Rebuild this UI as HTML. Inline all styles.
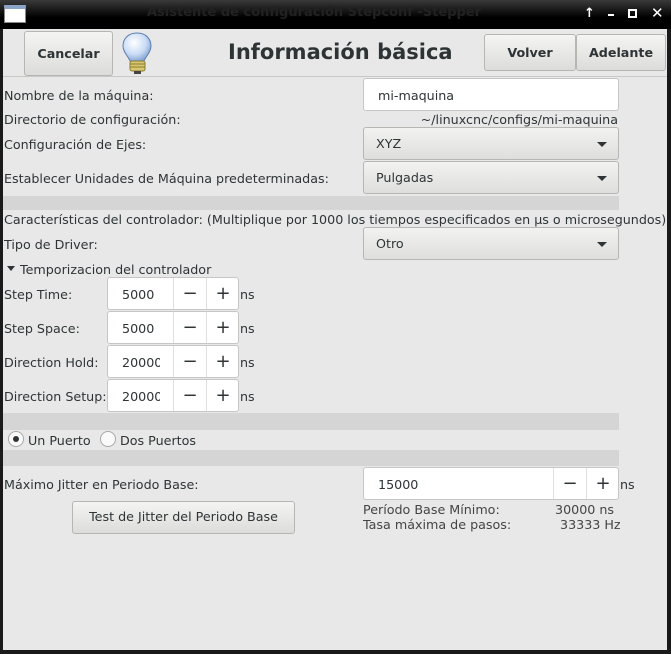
<!DOCTYPE html>
<html><head><meta charset="utf-8"><style>
*{box-sizing:border-box;margin:0;padding:0}
body{width:671px;height:654px;background:#1a1a1a;font-family:"DejaVu Sans","Liberation Sans",sans-serif;font-size:12.7px;color:#2e3436;position:relative;overflow:hidden}
.a{position:absolute;white-space:nowrap}
#title{left:0;top:0;width:671px;height:29px;background:linear-gradient(#3a3a3a,#000 60%);}
#win{left:3px;top:29px;width:664px;height:621px;background:#e8e8e8}
.btn{position:absolute;border:1px solid #b6b6b3;border-radius:3px;background:linear-gradient(#f4f4f3,#dcdcda);text-align:center;font-weight:bold;color:#2e3436}
.combo{position:absolute;border:1px solid #b6b6b3;border-radius:3px;background:linear-gradient(#f2f2f1,#dededc);padding-left:12px;line-height:32px}
.combo:after{content:"";position:absolute;right:11px;top:14px;border-left:5px solid transparent;border-right:5px solid transparent;border-top:5px solid #2e3436}
.entry{position:absolute;border:1px solid #c6c6c4;border-radius:3px;background:#fff}
.band{position:absolute;left:3px;width:616px;background:#d5d5d5}
.spin{position:absolute;border:1px solid #c6c6c4;border-radius:3px;background:#fff;height:33px}
.spin .v{position:absolute;left:14px;top:9px}
.spin .m,.spin .p{position:absolute;top:0;width:33px;height:31px;border-left:1px solid #e0e0e0;text-align:center;line-height:31px;font-size:18px}
</style></head><body>
<div class="a" id="title"></div>
<div class="a" style="left:4px;top:5px;width:22px;height:18px;background:#fff;border:1px solid #888;border-top:4px solid #8aa4c8"></div>
<div class="a" style="left:147px;top:5px;font-weight:bold;color:#222;font-size:13px">Asistente de configuración Stepconf -Stepper</div>
<div class="a" style="left:584px;top:6px;color:#fff;font-weight:bold;font-size:13px">↑</div>
<div class="a" style="left:608px;top:14px;width:6px;height:2px;background:#fff"></div>
<div class="a" style="left:628px;top:9px;width:9px;height:9px;border:2px solid #fff"></div>
<div class="a" style="left:651px;top:4px;color:#fff;font-weight:bold;font-size:15px">✕</div>
<div class="a" id="win"></div>
<div class="btn" style="left:24px;top:31px;width:89px;height:45px;line-height:43px">Cancelar</div>
<svg class="a" style="left:119px;top:30px" width="38" height="46" viewBox="0 0 38 46"><defs><radialGradient id="g" cx=".4" cy=".35" r=".7"><stop offset="0" stop-color="#fff"/><stop offset=".6" stop-color="#c9dcf5"/><stop offset="1" stop-color="#7d9fd0"/></radialGradient></defs><path d="M18 3C9 3 4 9 4 16c0 6 5 10 7 15h14c2-5 7-9 7-15 0-7-5-13-14-13z" fill="url(#g)" stroke="#5f7fae"/><rect x="11" y="31" width="15" height="10" rx="2" fill="#d8c770" stroke="#8b7c2e"/><path d="M11 34h15M11 37h15" stroke="#8b7c2e"/><rect x="15" y="41" width="7" height="3" fill="#444"/></svg>
<div class="a" style="left:228px;top:40px;font-size:21px;font-weight:bold;color:#2e3436">Información básica</div>
<div class="btn" style="left:484px;top:34px;width:92px;height:37px;line-height:35px">Volver</div>
<div class="btn" style="left:576px;top:34px;width:90px;height:37px;line-height:35px">Adelante</div>
<div class="a" style="left:3px;top:76px;width:664px;height:1px;background:#c8c8c8"></div>
<div class="a" style="left:4px;top:88px">Nombre de la máquina:</div>
<div class="entry" style="left:363px;top:78px;width:256px;height:33px"><span class="a" style="left:14px;top:9px">mi-maquina</span></div>
<div class="a" style="left:4px;top:112px">Directorio de configuración:</div>
<div class="a" style="right:53px;top:112px">~/linuxcnc/configs/mi-maquina</div>
<div class="a" style="left:4px;top:137px">Configuración de Ejes:</div>
<div class="combo" style="left:363px;top:127px;width:256px;height:33px">XYZ</div>
<div class="a" style="left:4px;top:171px">Establecer Unidades de Máquina predeterminadas:</div>
<div class="combo" style="left:363px;top:161px;width:256px;height:33px">Pulgadas</div>
<div class="band" style="top:196px;height:14px"></div>
<div class="a" style="left:4px;top:212px">Características del controlador: (Multiplique por 1000 los tiempos especificados en µs o microsegundos)</div>
<div class="a" style="left:4px;top:237px">Tipo de Driver:</div>
<div class="combo" style="left:363px;top:227px;width:256px;height:33px">Otro</div>
<div class="a" style="left:7px;top:266px;width:0;height:0;border-left:4px solid transparent;border-right:4px solid transparent;border-top:5px solid #2e3436"></div>
<div class="a" style="left:20px;top:262px">Temporizacion del controlador</div>
<div class="a" style="left:4px;top:287px">Step Time:</div>
<div class="a" style="left:4px;top:321px">Step Space:</div>
<div class="a" style="left:4px;top:355px">Direction Hold:</div>
<div class="a" style="left:4px;top:389px">Direction Setup:</div>
<div class="spin" style="left:107px;top:277px;width:132px"><span class="v">5000</span><div class="m" style="left:65px">−</div><div class="p" style="left:98px">+</div></div>
<div class="spin" style="left:107px;top:311px;width:132px"><span class="v">5000</span><div class="m" style="left:65px">−</div><div class="p" style="left:98px">+</div></div>
<div class="spin" style="left:107px;top:345px;width:132px;overflow:hidden"><span class="v" style="width:38px;overflow:hidden">20000</span><div class="m" style="left:65px">−</div><div class="p" style="left:98px">+</div></div>
<div class="spin" style="left:107px;top:379px;width:132px;overflow:hidden"><span class="v" style="width:38px;overflow:hidden">20000</span><div class="m" style="left:65px">−</div><div class="p" style="left:98px">+</div></div>
<div class="a" style="left:240px;top:287px">ns</div>
<div class="a" style="left:240px;top:321px">ns</div>
<div class="a" style="left:240px;top:355px">ns</div>
<div class="a" style="left:240px;top:389px">ns</div>
<div class="band" style="top:413px;height:17px"></div>
<div class="a" style="left:8px;top:431px;width:16px;height:16px;border:1px solid #a8a8a6;border-radius:50%;background:#fafafa"></div>
<div class="a" style="left:13px;top:436px;width:6px;height:6px;border-radius:50%;background:#2e3436"></div>
<div class="a" style="left:28px;top:433px">Un Puerto</div>
<div class="a" style="left:100px;top:431px;width:16px;height:16px;border:1px solid #a8a8a6;border-radius:50%;background:#fafafa"></div>
<div class="a" style="left:120px;top:433px">Dos Puertos</div>
<div class="band" style="top:450px;height:16px"></div>
<div class="a" style="left:4px;top:477px">Máximo Jitter en Periodo Base:</div>
<div class="spin" style="left:363px;top:467px;width:256px"><span class="v">15000</span><div class="m" style="left:189px">−</div><div class="p" style="left:222px">+</div></div>
<div class="a" style="left:620px;top:477px">ns</div>
<div class="btn" style="left:72px;top:501px;width:223px;height:33px;line-height:30px;font-weight:normal">Test de Jitter del Periodo Base</div>
<div class="a" style="left:363px;top:502px;color:#444">Período Base Mínimo:</div>
<div class="a" style="left:555px;top:502px;color:#444">30000 ns</div>
<div class="a" style="left:363px;top:517px;color:#444">Tasa máxima de pasos:</div>
<div class="a" style="left:560px;top:517px;color:#444">33333 Hz</div>
</body></html>
